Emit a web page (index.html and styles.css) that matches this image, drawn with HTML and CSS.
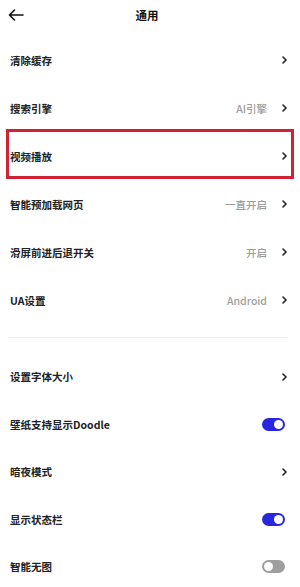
FILE: index.html
```html
<!DOCTYPE html>
<html lang="zh-CN">
<head>
<meta charset="utf-8">
<title>通用</title>
<link rel="stylesheet" href="styles.css">
</head>
<body>
<div class="page">
  <header class="topbar">
    <svg class="back" width="16" height="12" viewBox="0 0 16 12"><path d="M15 6H1.5M6.5 1L1.5 6l5 5" fill="none" stroke="#111" stroke-width="1.6" stroke-linecap="round" stroke-linejoin="round"/></svg>
    <div class="title">通用</div>
  </header>
  <ul class="list first">
    <li class="row"><span class="label">清除缓存</span><span class="right"><svg class="chev" width="5" height="8" viewBox="0 0 5 8"><path d="M1 1l3 3-3 3" fill="none" stroke="#222" stroke-width="1.6" stroke-linecap="round" stroke-linejoin="round"/></svg></span></li>
    <li class="row"><span class="label">搜索引擎</span><span class="right"><span class="value">AI引擎</span><svg class="chev" width="5" height="8" viewBox="0 0 5 8"><path d="M1 1l3 3-3 3" fill="none" stroke="#222" stroke-width="1.6" stroke-linecap="round" stroke-linejoin="round"/></svg></span></li>
    <li class="row highlight"><span class="label">视频播放</span><span class="right"><svg class="chev" width="5" height="8" viewBox="0 0 5 8"><path d="M1 1l3 3-3 3" fill="none" stroke="#222" stroke-width="1.6" stroke-linecap="round" stroke-linejoin="round"/></svg></span></li>
    <li class="row"><span class="label">智能预加载网页</span><span class="right"><span class="value">一直开启</span><svg class="chev" width="5" height="8" viewBox="0 0 5 8"><path d="M1 1l3 3-3 3" fill="none" stroke="#222" stroke-width="1.6" stroke-linecap="round" stroke-linejoin="round"/></svg></span></li>
    <li class="row"><span class="label">滑屏前进后退开关</span><span class="right"><span class="value">开启</span><svg class="chev" width="5" height="8" viewBox="0 0 5 8"><path d="M1 1l3 3-3 3" fill="none" stroke="#222" stroke-width="1.6" stroke-linecap="round" stroke-linejoin="round"/></svg></span></li>
    <li class="row"><span class="label">UA设置</span><span class="right"><span class="value">Android</span><svg class="chev" width="5" height="8" viewBox="0 0 5 8"><path d="M1 1l3 3-3 3" fill="none" stroke="#222" stroke-width="1.6" stroke-linecap="round" stroke-linejoin="round"/></svg></span></li>
  </ul>
  <div class="divider"></div>
  <ul class="list second">
    <li class="row"><span class="label">设置字体大小</span><span class="right"><svg class="chev" width="5" height="8" viewBox="0 0 5 8"><path d="M1 1l3 3-3 3" fill="none" stroke="#222" stroke-width="1.6" stroke-linecap="round" stroke-linejoin="round"/></svg></span></li>
    <li class="row"><span class="label">壁纸支持显示Doodle</span><span class="right"><span class="toggle on"><span class="knob"></span></span></span></li>
    <li class="row"><span class="label">暗夜模式</span><span class="right"><svg class="chev" width="5" height="8" viewBox="0 0 5 8"><path d="M1 1l3 3-3 3" fill="none" stroke="#222" stroke-width="1.6" stroke-linecap="round" stroke-linejoin="round"/></svg></span></li>
    <li class="row"><span class="label">显示状态栏</span><span class="right"><span class="toggle on"><span class="knob"></span></span></span></li>
    <li class="row"><span class="label">智能无图</span><span class="right"><span class="toggle off"><span class="knob"></span></span></span></li>
  </ul>
</div>
</body>
</html>
```
FILE: styles.css
```css
* { box-sizing: border-box; }
html, body { margin: 0; padding: 0; background: #fff; }
body {
  font-family: "Noto Sans CJK SC", "Noto Sans", sans-serif;
  color: #1e1e1e;
  overflow: hidden;
}
.page { width: 300px; height: 587px; overflow: hidden; }
.topbar {
  height: 30px;
  display: flex;
  align-items: center;
  justify-content: center;
  position: relative;
}
.back { position: absolute; left: 8px; top: 9px; }
.title { font-size: 11.5px; font-weight: 700; color: #111; margin-left: -6px; }
.list { list-style: none; margin: 0; padding: 0; }
.list.first { padding-top: 6px; }
.row {
  height: 48px;
  display: flex;
  align-items: center;
  justify-content: space-between;
  padding: 0 14px 0 10px;
  position: relative;
}
.list.second .row { height: 47.5px; }
.label { font-size: 10.5px; font-weight: 700; color: #222; letter-spacing: 0; }
.right { display: flex; align-items: center; gap: 15px; }
.value { font-size: 10.5px; color: #9c9c9c; font-weight: 500; }
.chev { display: block; margin-right: -1px; }
.highlight::after {
  content: "";
  position: absolute;
  left: 6px; right: 6px; top: -3px; bottom: 1px;
  border: 3px solid #cf2232;
  pointer-events: none;
}
.divider { height: 1px; background: #efefef; margin: 13px 12px 15px 8px; }
.toggle {
  width: 23px; height: 13px; border-radius: 7px;
  display: flex; align-items: center; padding: 0 2px;
  margin-right: 1px;
}
.toggle.on { background: #2a26e0; justify-content: flex-end; }
.toggle.off { background: #9e9e9e; justify-content: flex-start; }
.knob { width: 9px; height: 9px; border-radius: 50%; background: #fff; }
```
